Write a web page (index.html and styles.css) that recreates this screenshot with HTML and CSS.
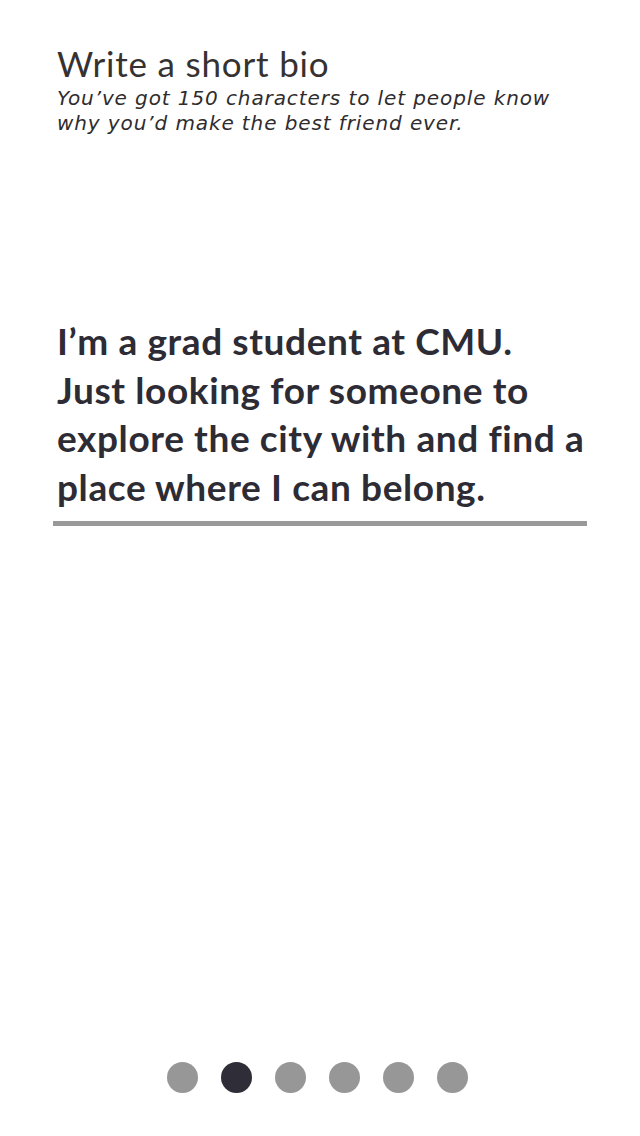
FILE: index.html
```html
<!DOCTYPE html>
<html>
<head>
<meta charset="utf-8">
<link rel="stylesheet" href="styles.css">
</head>
<body>
<div class="screen">
  <header class="intro">
    <h1 class="title">Write a short bio</h1>
    <p class="subtitle">You’ve got 150 characters to let people know why you’d make the best friend ever.</p>
  </header>
  <section class="bio">
    <p class="bio-text">I’m a grad student at CMU.<br>Just looking for someone to<br>explore the city with and find a<br>place where I can belong.</p>
    <div class="bio-line"></div>
  </section>
  <nav class="dots">
    <span class="dot"></span>
    <span class="dot active"></span>
    <span class="dot"></span>
    <span class="dot"></span>
    <span class="dot"></span>
    <span class="dot"></span>
  </nav>
</div>
</body>
</html>
```
FILE: styles.css
```css
html, body {
  margin: 0;
  padding: 0;
  background: #ffffff;
}
.screen {
  width: 640px;
  height: 1136px;
  display: flex;
  flex-direction: column;
  font-family: Lato, "Liberation Sans", sans-serif;
}
.intro {
  padding: 43px 0 0 57px;
}
.title {
  margin: 0;
  font-size: 35px;
  font-weight: 400;
  line-height: 40px;
  letter-spacing: 0.8px;
  color: #363232;
}
.subtitle {
  margin: 3px 0 0 0;
  width: 505px;
  font-family: "DejaVu Sans", "Open Sans", sans-serif;
  font-size: 20px;
  font-style: italic;
  line-height: 25px;
  letter-spacing: 0.9px;
  color: #2f2c2e;
}
.bio {
  padding: 181px 53px 0 53px;
}
.bio-text {
  margin: 0 -14px 0 0;
  padding-left: 4px;
  font-size: 37px;
  font-weight: 700;
  line-height: 48.5px;
  letter-spacing: 0.6px;
  white-space: nowrap;
  color: #2d2c35;
}
.bio-line {
  height: 5px;
  margin-top: 10px;
  background: #999999;
}
.dots {
  margin-top: auto;
  margin-bottom: 43px;
  padding-right: 6px;
  display: flex;
  justify-content: center;
  gap: 23px;
}
.dot {
  width: 31px;
  height: 31px;
  border-radius: 50%;
  background: #979797;
}
.dot.active {
  background: #2e2d38;
}
```
